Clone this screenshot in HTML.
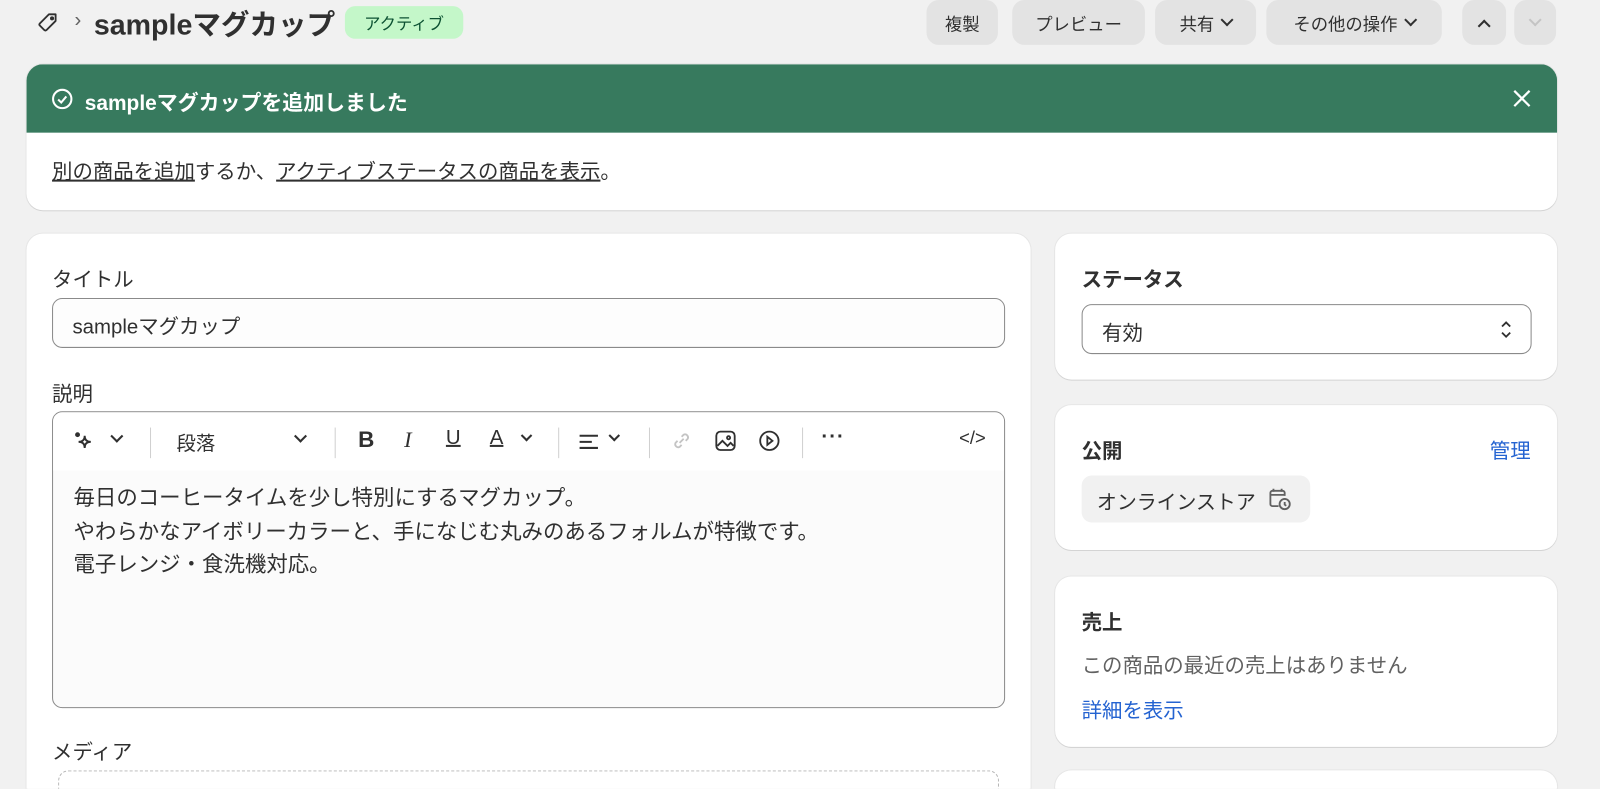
<!DOCTYPE html>
<html><head><meta charset="utf-8"><style>
*{box-sizing:border-box;margin:0;padding:0}
html,body{width:1600px;height:789px;overflow:hidden;background:#f1f1f1}
body{font-family:"Liberation Sans","Noto Sans CJK JP",sans-serif;color:#303030;position:relative}
#w{position:absolute;left:0;top:0;width:1568px;height:773px;overflow:hidden;transform:scale(1.0204);transform-origin:0 0}
.abs{position:absolute}
.btn{position:absolute;top:0;height:44px;background:#e3e3e3;border-radius:12px;font-size:17px;color:#303030;display:flex;align-items:center;justify-content:center;gap:8px}
.card{position:absolute;background:#fff;border-radius:16px;box-shadow:0 1px 0 #d4d4d4,0 0 0 1px #e6e6e6}
.lbl{position:absolute;font-size:20px;color:#303030}
.chev{width:9px;height:9px;border-right:2px solid #303030;border-bottom:2px solid #303030;transform:rotate(45deg);margin-top:-5px}
.sep{position:absolute;top:15px;width:1px;height:30px;background:#d0d0d0}
.ti{position:absolute;top:18px;font-size:20px;color:#303030}
</style></head><body><div id="w">
<svg class="abs" style="left:36px;top:11px" width="22" height="22" viewBox="0 0 22 22" fill="none" stroke="#303030" stroke-width="1.8"><path d="M12 3h6.5v6.5l-9 9a1.5 1.5 0 01-2 0l-4.5-4.5a1.5 1.5 0 010-2z" stroke-linejoin="round"/><circle cx="15" cy="7" r="1.1" fill="#303030"/></svg>
<div class="abs" style="left:73px;top:9px;font-size:20px;color:#616161">›</div>
<div class="abs" style="left:92px;top:3px;font-size:28px;font-weight:bold;color:#303030">sampleマグカップ</div>
<div class="abs" style="left:338px;top:6px;width:116px;height:32px;background:#c4f7c9;border-radius:10px;font-size:16px;color:#0c5132;display:flex;align-items:center;justify-content:center">アクティブ</div>
<div class="btn" style="left:908px;width:70px">複製</div>
<div class="btn" style="left:992px;width:130px">プレビュー</div>
<div class="btn" style="left:1132px;width:99px">共有 <span class="chev"></span></div>
<div class="btn" style="left:1241px;width:172px">その他の操作 <span class="chev"></span></div>
<div class="btn" style="left:1433px;width:43px"><span class="chev" style="transform:rotate(225deg);margin-top:6px"></span></div>
<div class="btn" style="left:1484px;width:41px"><span class="chev" style="border-color:#c4c4c4"></span></div>

<div class="card" style="left:26px;top:63px;width:1500px;height:143px;overflow:hidden">
<div style="height:67px;background:#377a5e;position:relative">
<svg class="abs" style="left:23px;top:22px" width="24" height="24" viewBox="0 0 24 24" fill="none" stroke="#fff" stroke-width="2"><circle cx="12" cy="12" r="9"/><path d="M8 12.5l3 3 5-6"/></svg>
<div class="abs" style="left:57px;top:21px;font-size:20.5px;font-weight:bold;color:#fff">sampleマグカップを追加しました</div>
<svg class="abs" style="left:1456px;top:24px" width="19" height="19" viewBox="0 0 19 19" stroke="#fff" stroke-width="2.2"><path d="M2 2l15 15M17 2L2 17"/></svg>
</div>
<div class="abs" style="left:25px;top:89px;font-size:20px;color:#303030"><u>別の商品を追加</u>するか、<u>アクティブステータスの商品を表示</u>。</div>
</div>

<div class="card" style="left:26px;top:229px;width:984px;height:600px">
<div class="lbl" style="left:25px;top:29px">タイトル</div>
<div class="abs" style="left:25px;top:63px;width:934px;height:49px;border:1px solid #8a8a8a;border-radius:10px;background:#fdfdfd;font-size:20px;padding:11px 19px">sampleマグカップ</div>
<div class="lbl" style="left:25px;top:141px">説明</div>
<div class="abs" style="left:25px;top:174px;width:934px;height:291px;border:1px solid #8a8a8a;border-radius:10px;background:#fbfbfb;overflow:hidden">
<div style="height:57px;background:#fff;position:relative">
<svg class="abs" style="left:20px;top:17px" width="22" height="22" viewBox="0 0 22 22" fill="none" stroke="#303030" stroke-width="1.8"><path d="M11 6c0 4 2 6 6 6-4 0-6 2-6 6 0-4-2-6-6-6 4 0 6-2 6-6z"/><circle cx="4" cy="5" r="1.5" fill="#303030"/></svg>
<span class="chev abs" style="left:58px;top:24px"></span>
<div class="sep" style="left:95px"></div>
<div class="ti" style="left:121px;font-size:19px;top:16px">段落</div>
<span class="chev abs" style="left:238px;top:24px"></span>
<div class="sep" style="left:276px"></div>
<div class="ti" style="left:299px;font-weight:bold;font-size:22px;top:14px">B</div>
<div class="ti" style="left:344px;font-style:italic;font-family:'Liberation Serif',serif;font-size:22px;top:14px">I</div>
<div class="ti" style="left:385px;text-decoration:underline;top:14px">U</div>
<div class="ti" style="left:428px;text-decoration:underline;top:14px">A</div>
<span class="chev abs" style="left:460px;top:24px;width:8px;height:8px"></span>
<div class="sep" style="left:495px"></div>
<svg class="abs" style="left:515px;top:20px" width="20" height="18" stroke="#303030" stroke-width="2"><path d="M1 3h18M1 9h12M1 15h18"/></svg>
<span class="chev abs" style="left:546px;top:24px;width:8px;height:8px"></span>
<div class="sep" style="left:584px"></div>
<svg class="abs" style="left:605px;top:17px" width="22" height="22" viewBox="0 0 22 22" fill="none" stroke="#c4c4c4" stroke-width="1.8"><path d="M9 13l4-4M7 11l-2 2a3 3 0 004 4l2-2M15 11l2-2a3 3 0 00-4-4l-2 2"/></svg>
<svg class="abs" style="left:648px;top:17px" width="22" height="22" viewBox="0 0 22 22" fill="none" stroke="#303030" stroke-width="1.8"><rect x="2" y="2" width="18" height="18" rx="4"/><path d="M3 16l5-5 5 5 3-3 3 3"/><circle cx="14" cy="8" r="1.5"/></svg>
<svg class="abs" style="left:691px;top:17px" width="22" height="22" viewBox="0 0 22 22" fill="none" stroke="#303030" stroke-width="1.8"><circle cx="11" cy="11" r="9"/><path d="M9 7l5 4-5 4z"/></svg>
<div class="sep" style="left:734px"></div>
<div class="ti" style="left:753px;top:13px;font-weight:bold;letter-spacing:1px">···</div>
<div class="ti" style="left:888px;top:15px;font-size:18px">&lt;/&gt;</div>
</div>
<div style="padding:12px 20px;font-size:21px;line-height:32.5px;color:#303030">毎日のコーヒータイムを少し特別にするマグカップ。<br>やわらかなアイボリーカラーと、手になじむ丸みのあるフォルムが特徴です。<br>電子レンジ・食洗機対応。</div>
</div>
<div class="lbl" style="left:25px;top:492px">メディア</div>
<div class="abs" style="left:31px;top:526px;width:922px;height:60px;border:1px dashed #b5b5b5;border-radius:10px"></div>
</div>

<div class="card" style="left:1034px;top:229px;width:492px;height:143px">
<div class="lbl" style="left:26px;top:29px;font-weight:bold">ステータス</div>
<div class="abs" style="left:26px;top:69px;width:441px;height:49px;border:1px solid #8a8a8a;border-radius:10px;font-size:20px;padding:11px 19px">有効
<svg class="abs" style="right:18px;top:14px" width="12" height="20" fill="none" stroke="#303030" stroke-width="1.8"><path d="M2 7l4-4 4 4M2 13l4 4 4-4"/></svg></div>
</div>

<div class="card" style="left:1034px;top:397px;width:492px;height:142px">
<div class="lbl" style="left:26px;top:29px;font-weight:bold">公開</div>
<div class="lbl" style="right:26px;top:29px;color:#2463d1">管理</div>
<div class="abs" style="left:26px;top:69px;width:224px;height:46px;background:#f1f1f1;border-radius:10px;font-size:19.5px;padding:10px 15px">オンラインストア
<svg class="abs" style="left:182px;top:11px" width="26" height="25" viewBox="0 0 26 25" fill="none" stroke="#616161" stroke-width="1.8"><path d="M11 19H5a2 2 0 01-2-2V6a2 2 0 012-2h10a2 2 0 012 2v3M3 8h14M6 2v3M14 2v3"/><circle cx="17" cy="17" r="5"/><path d="M17 15v2.5l1.5 1.2"/></svg></div>
</div>

<div class="card" style="left:1034px;top:565px;width:492px;height:167px">
<div class="lbl" style="left:26px;top:29px;font-weight:bold">売上</div>
<div class="lbl" style="left:26px;top:71px;color:#616161">この商品の最近の売上はありません</div>
<div class="lbl" style="left:26px;top:115px;color:#2463d1">詳細を表示</div>
</div>
<div class="card" style="left:1034px;top:755px;width:492px;height:60px"></div>
</div></body></html>
